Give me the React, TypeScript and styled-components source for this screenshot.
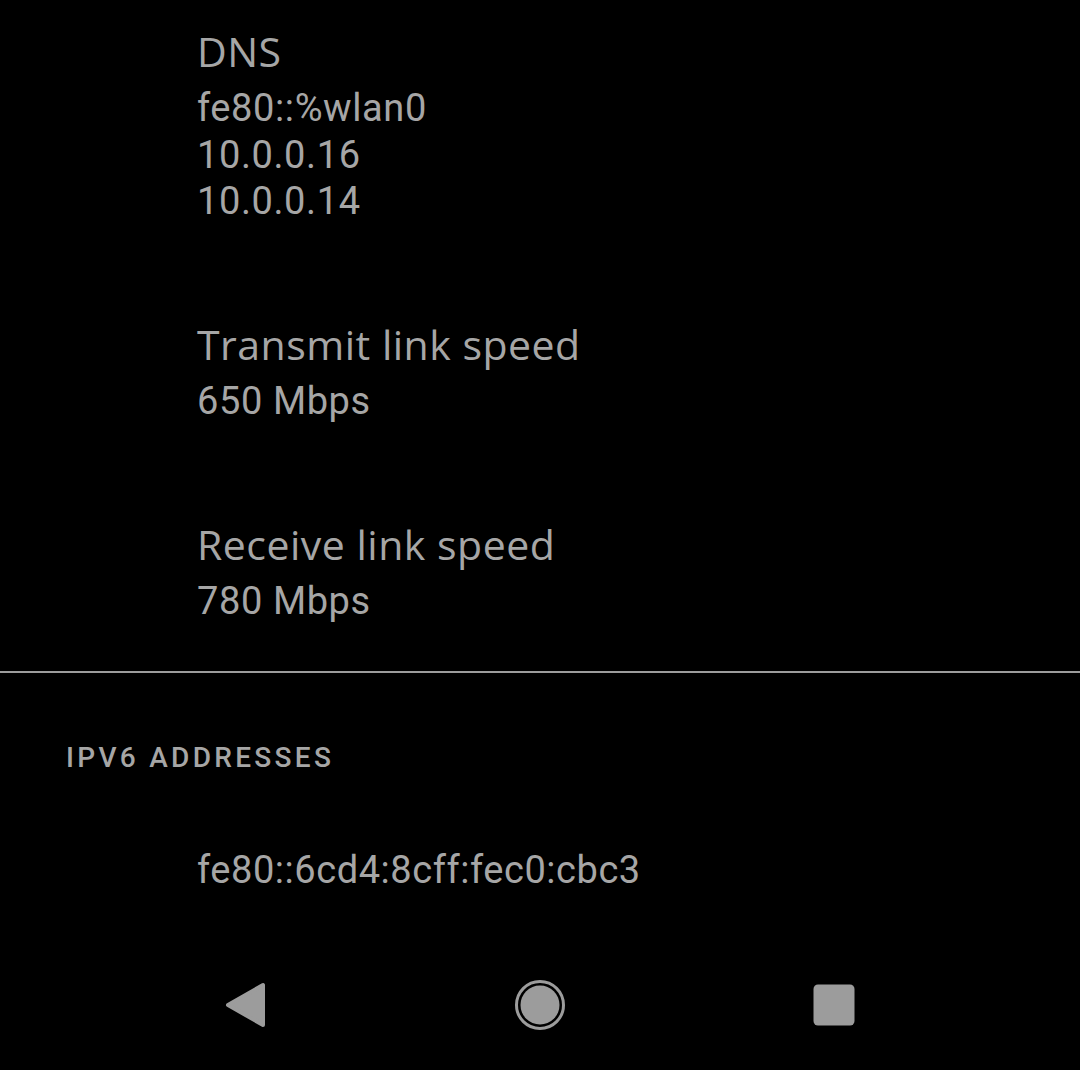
import React from "react";
import styled, { createGlobalStyle } from "styled-components";

const Global = createGlobalStyle`
  html, body { margin: 0; padding: 0; background: #000; }
  body { width: 1080px; height: 1070px; overflow: hidden; font-family: Roboto, "Noto Sans", sans-serif; }
`;

const Screen = styled.div`
  width: 1080px;
  height: 1070px;
  background: #000;
  display: flex;
  flex-direction: column;
  overflow: hidden;
`;

const Scroller = styled.div`
  flex: 1;
  overflow: hidden;
  display: flex;
  flex-direction: column;
`;

const List = styled.div`
  display: flex;
  flex-direction: column;
  margin-top: -22.5px;
`;

const Item = styled.div<{ $pb?: number }>`
  display: flex;
  flex-direction: column;
  padding: 45.75px 40px ${(p) => p.$pb ?? 45.75}px 197px;
`;

const Title = styled.div`
  font-family: "Open Sans", Roboto, sans-serif;
  font-size: 41px;
  line-height: 56px;
  letter-spacing: 0.5px;
  color: #a6a6a6;
  white-space: nowrap;
`;

const Summary = styled.div`
  font-family: Roboto, "Noto Sans", sans-serif;
  font-size: 38px;
  line-height: 46.5px;
  letter-spacing: 0.6px;
  color: #a6a6a6;
  margin-top: 6px;
  white-space: nowrap;
`;

const Divider = styled.div`
  height: 2px;
  background: #9c9c9c;
`;

const Category = styled.div`
  font-family: Roboto, "Noto Sans", sans-serif;
  font-weight: 500;
  font-size: 28px;
  line-height: 36px;
  letter-spacing: 3.3px;
  color: #a6a6a6;
  padding: 67.4px 0 0 66px;
`;

const Address = styled.div`
  font-family: Roboto, "Noto Sans", sans-serif;
  font-size: 38px;
  line-height: 46.5px;
  letter-spacing: 0.55px;
  color: #a6a6a6;
  padding: 70.4px 0 0 197px;
  white-space: nowrap;
`;

const NavBar = styled.div`
  height: 126px;
  flex: none;
  display: flex;
  justify-content: center;
  align-items: center;
  gap: 174px;
  padding: 0 0 4px 0;
  box-sizing: border-box;
`;

const NavButton = styled.div`
  width: 120px;
  height: 100px;
  display: flex;
  align-items: center;
  justify-content: center;
`;

const Back = () => (
  <svg width="44" height="48" viewBox="0 0 44 48">
    <polygon
      points="4,24 39,4 39,44"
      fill="#9c9c9c"
      stroke="#9c9c9c"
      strokeWidth="4"
      strokeLinejoin="round"
    />
  </svg>
);

const Home = () => (
  <svg width="52" height="52" viewBox="0 0 52 52">
    <circle cx="26" cy="26" r="23.5" fill="none" stroke="#9c9c9c" strokeWidth="3" />
    <circle cx="26" cy="26" r="19.5" fill="#9c9c9c" />
  </svg>
);

const Recents = () => (
  <svg width="42" height="42" viewBox="0 0 42 42">
    <rect x="0.5" y="0.5" width="41" height="41" rx="4.5" fill="#9c9c9c" />
  </svg>
);

export default function App() {
  return (
    <>
      <Global />
      <Screen>
        <Scroller>
          <List>
            <Item>
              <Title>DNS</Title>
              <Summary>
                fe80::%wlan0
                <br />
                10.0.0.16
                <br />
                10.0.0.14
              </Summary>
            </Item>
            <Item>
              <Title>Transmit link speed</Title>
              <Summary>650 Mbps</Summary>
            </Item>
            <Item $pb={46}>
              <Title>Receive link speed</Title>
              <Summary>780 Mbps</Summary>
            </Item>
            <Divider />
            <Category>IPV6 ADDRESSES</Category>
            <Address>fe80::6cd4:8cff:fec0:cbc3</Address>
          </List>
        </Scroller>
        <NavBar>
          <NavButton>
            <Back />
          </NavButton>
          <NavButton>
            <Home />
          </NavButton>
          <NavButton>
            <Recents />
          </NavButton>
        </NavBar>
      </Screen>
    </>
  );
}
